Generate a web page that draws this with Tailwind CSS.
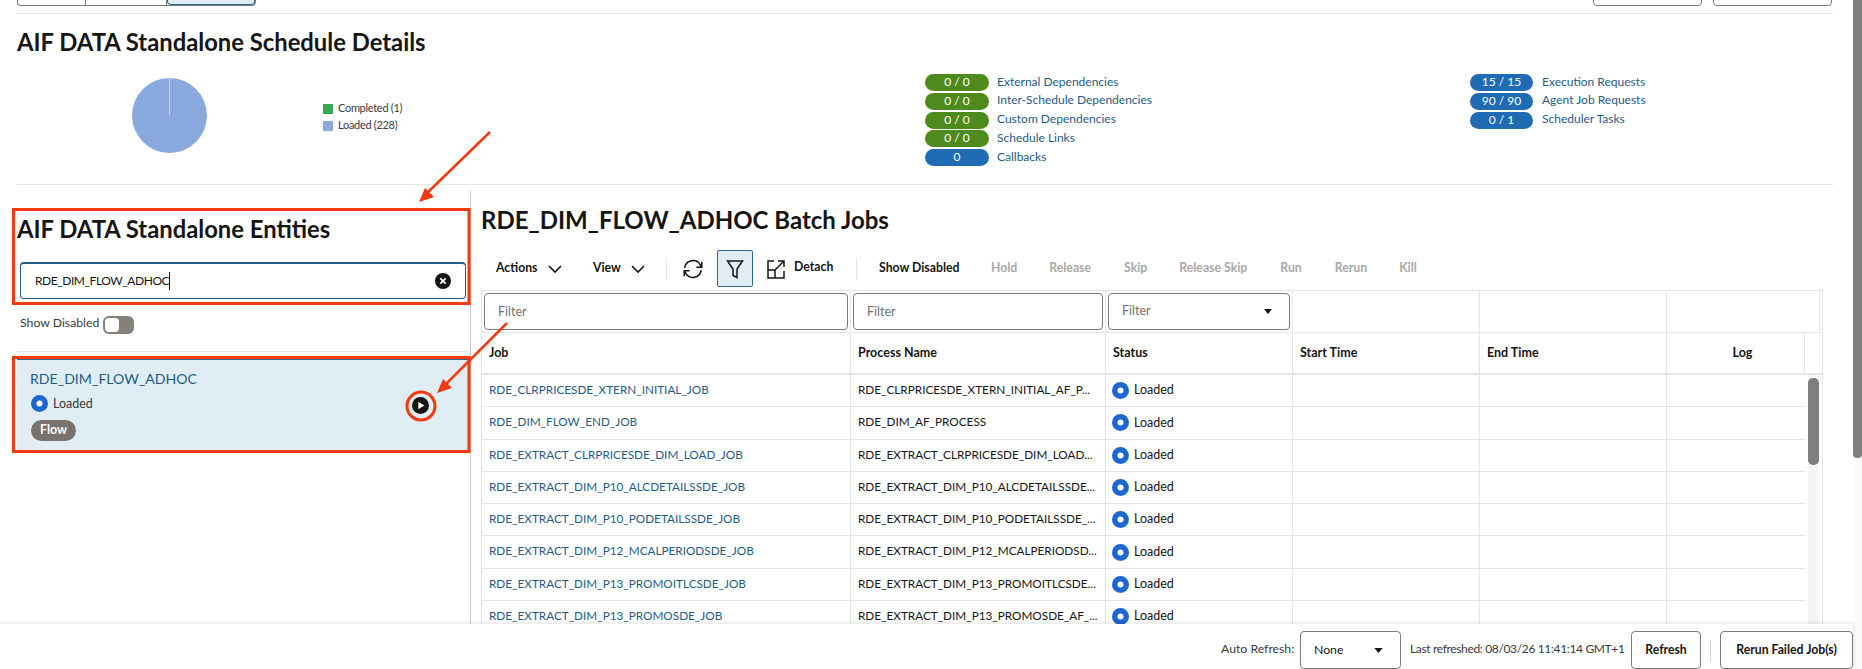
<!DOCTYPE html>
<html><head><meta charset="utf-8"><title>Schedule</title>
<script src="https://cdn.jsdelivr.net/npm/@tailwindcss/browser@4"></script></head>
<body class="bg-white">
<div class="relative flex w-[1862px] h-[669px] overflow-hidden bg-white text-[#161513] font-['Lato','Noto_Sans',sans-serif]">
  <div class="w-[1853px] flex flex-col">
    <div class="h-[624px] overflow-hidden px-[17px]">
      <div class="h-[14px] w-[1816px] border-b border-[#e5e5e5] flex justify-between">
        <div class="flex h-[6px] w-[239px] border border-t-0 border-[#7a7a7a] rounded-b-[4px]">
          <div class="w-[68px] border-r border-[#7a7a7a]"></div>
          <div class="w-[81px] border-r border-[#7a7a7a]"></div>
          <div class="flex-1 bg-[#e0edf5] border border-t-0 border-[#2b6a8e] rounded-b-[4px]"></div>
        </div>
        <div class="flex gap-[11px] mr-[1px]">
          <div class="w-[109px] h-[10px] -mt-[4px] border border-[#7a7a7a] rounded-b-[4px]"></div>
          <div class="w-[119px] h-[10px] -mt-[4px] border border-[#7a7a7a] rounded-b-[4px]"></div>
        </div>
      </div>
      <div class="h-[171px] w-[1816px] border-b border-[#e5e5e5]">
        <h1 class="pt-[12px] text-[23.8px] leading-[32px] font-bold">AIF DATA Standalone Schedule Details</h1>
        <div class="grid grid-cols-[306px_602px_545px_1fr]">
          <div class="pl-[115px] pt-[20px]">
            <svg width="75" height="75" viewBox="0 0 75 75"><circle cx="37.5" cy="37.5" r="37.5" fill="#8aa9dc"/><line x1="37.5" y1="0" x2="37.5" y2="37" stroke="#c5d4ec" stroke-width="1"/></svg>
          </div>
          <div class="pt-[42px] text-[11px] tracking-[-0.3px] text-[#3a3a3a]">
            <div class="flex items-center h-[17px]"><span class="w-[10px] h-[10px] bg-[#34a853] mr-[5px]"></span>Completed (1)</div>
            <div class="flex items-center h-[17px]"><span class="w-[10px] h-[10px] bg-[#8aa9dc] mr-[5px]"></span>Loaded (228)</div>
          </div>
          <div class="pt-[16px] text-[12px] flex flex-col gap-[1.75px]">
            <div class="flex items-center h-[17px]"><span class="w-[64px] h-full rounded-full bg-[#4f8a1c] text-white text-center leading-[15px]">0 / 0</span><span class="ml-[8px] -mt-[2px] text-[#1f5c85]">External Dependencies</span></div>
            <div class="flex items-center h-[17px]"><span class="w-[64px] h-full rounded-full bg-[#4f8a1c] text-white text-center leading-[15px]">0 / 0</span><span class="ml-[8px] -mt-[2px] text-[#1f5c85]">Inter-Schedule Dependencies</span></div>
            <div class="flex items-center h-[17px]"><span class="w-[64px] h-full rounded-full bg-[#4f8a1c] text-white text-center leading-[15px]">0 / 0</span><span class="ml-[8px] -mt-[2px] text-[#1f5c85]">Custom Dependencies</span></div>
            <div class="flex items-center h-[17px]"><span class="w-[64px] h-full rounded-full bg-[#4f8a1c] text-white text-center leading-[15px]">0 / 0</span><span class="ml-[8px] -mt-[2px] text-[#1f5c85]">Schedule Links</span></div>
            <div class="flex items-center h-[17px]"><span class="w-[64px] h-full rounded-full bg-[#1f6bb4] text-white text-center leading-[15px]">0</span><span class="ml-[8px] -mt-[2px] text-[#1f5c85]">Callbacks</span></div>
          </div>
          <div class="pt-[16px] text-[12px] flex flex-col gap-[1.75px]">
            <div class="flex items-center h-[17px]"><span class="w-[63px] h-full rounded-full bg-[#1f6bb4] text-white text-center leading-[15px]">15 / 15</span><span class="ml-[9px] -mt-[2px] text-[#1f5c85]">Execution Requests</span></div>
            <div class="flex items-center h-[17px]"><span class="w-[63px] h-full rounded-full bg-[#1f6bb4] text-white text-center leading-[15px]">90 / 90</span><span class="ml-[9px] -mt-[2px] text-[#1f5c85]">Agent Job Requests</span></div>
            <div class="flex items-center h-[17px]"><span class="w-[63px] h-full rounded-full bg-[#1f6bb4] text-white text-center leading-[15px]">0 / 1</span><span class="ml-[9px] -mt-[2px] text-[#1f5c85]">Scheduler Tasks</span></div>
          </div>
        </div>
      </div>
      <div class="flex mt-[6px] h-[433px]">
        <div class="w-[454px] border-r border-[#c8c8c8] pr-[2px]">
          <h2 class="pt-[22px] text-[23.8px] leading-[32px] font-bold">AIF DATA Standalone Entities</h2>
          <div class="ml-[3px] mt-[17px] w-[446px] h-[37px] border border-t-2 border-[#1f6088] rounded-[4px] flex items-center justify-between pl-[14px] pr-[14px] text-[12px] tracking-[-0.45px]">
            <span class="border-r border-[#161513] leading-[18px]">RDE_DIM_FLOW_ADHOC</span>
            <svg width="16" height="16" viewBox="0 0 16 16"><circle cx="8" cy="8" r="8" fill="#161513"/><path d="M5.3 5.3l5.4 5.4M10.7 5.3l-5.4 5.4" stroke="#fff" stroke-width="1.8"/></svg>
          </div>
          <div class="ml-[3px] mt-[17px] flex items-center h-[18px] text-[12.25px] text-[#3a3a3a]">
            <span class="-mt-[3px]">Show Disabled</span>
            <span class="ml-[4px] w-[31px] h-[18px] rounded-[6px] bg-[#86807a] p-[2px]"><span class="block w-[14px] h-[14px] bg-white rounded-[4px]"></span></span>
          </div>
          <div class="mt-[17px] border-t border-[#e5e5e5]"></div>
          <div class="mt-[7px] w-[451px] h-[91px] bg-[#e0edf5] border-t border-[#2b6a8e] pl-[13px] pr-[39px] pt-[9px] flex justify-between items-start">
            <div>
              <div class="text-[#1f5c85] text-[14.1px] leading-[20px]">RDE_DIM_FLOW_ADHOC</div>
              <div class="flex items-center gap-[5px] mt-[6px] ml-[1px] text-[12.5px] leading-[17px] text-[#3a3a3a]">
                <svg width="17" height="17" viewBox="0 0 17 17"><circle cx="8.5" cy="8.5" r="8.5" fill="#1f67d0"/><circle cx="8.5" cy="8.5" r="3" fill="#fff"/></svg>Loaded
              </div>
              <div class="mt-[8px] ml-[1px] w-[45px] h-[21px] rounded-full bg-[#79716b] text-white text-center text-[12.5px] font-bold leading-[20px]">Flow</div>
            </div>
            <svg width="17" height="17" viewBox="0 0 17 17" class="mt-[28px]"><circle cx="8.5" cy="8.5" r="8.5" fill="#161513"/><path d="M6.3 4.8v7.4l6-3.7z" fill="#fff"/></svg>
          </div>
        </div>
        <div class="flex-1 pl-[10px]">
          <h2 class="pt-[13px] text-[24px] leading-[32px] font-bold">RDE_DIM_FLOW_ADHOC Batch Jobs</h2>
          <div class="mt-[14px] h-[37px] flex items-center text-[12.25px] font-bold">
            <span class="ml-[15px] w-[41px]">Actions</span>
            <svg class="ml-[10px]" width="16" height="16" viewBox="0 0 16 16" fill="none" stroke="#161513" stroke-width="1.6"><path d="M2 5l6 6 6-6"/></svg>
            <span class="ml-[30px] w-[28px]">View</span>
            <svg class="ml-[9px]" width="16" height="16" viewBox="0 0 16 16" fill="none" stroke="#161513" stroke-width="1.6"><path d="M2 5l6 6 6-6"/></svg>
            <span class="ml-[20px] w-px h-[22px] bg-[#e5e5e5]"></span>
            <svg class="ml-[15px]" width="22" height="22" viewBox="0 0 20 20" fill="none" stroke="#161513" stroke-width="1.4"><path d="M2.5 9a7.6 7.6 0 0 1 14-3l1 2M17.5 11a7.6 7.6 0 0 1-14 3l-1-2"/><path d="M18 3.5v5h-5M2 16.5v-5h5"/></svg>
            <span class="ml-[13px] w-[36px] h-[37px] bg-[#e0edf5] border border-[#2b6a8e] rounded-[2px] flex items-center justify-center">
              <svg width="20" height="22" viewBox="0 0 20 22" fill="none" stroke="#161513" stroke-width="1.5"><path d="M2.5 3h15L12 11v8.5l-4-2V11z"/></svg>
            </span>
            <svg class="ml-[13px]" width="20" height="22" viewBox="0 0 20 22" fill="none" stroke="#161513" stroke-width="1.5"><path d="M8 3H2v17h16v-7"/><path d="M12 3h6v6M18 3L8 13M2 12h7v8"/></svg>
            <span class="ml-[8px] -mt-[2px] w-[38px]">Detach</span>
            <span class="ml-[24px] w-px h-[22px] bg-[#e5e5e5]"></span>
            <span class="ml-[22px] w-[79px] whitespace-nowrap">Show Disabled</span>
            <span class="ml-[33px] text-[#a9a9a9]">Hold</span>
            <span class="ml-[32px] text-[#a9a9a9]">Release</span>
            <span class="ml-[33px] text-[#a9a9a9]">Skip</span>
            <span class="ml-[32px] text-[#a9a9a9]">Release Skip</span>
            <span class="ml-[33px] text-[#a9a9a9]">Run</span>
            <span class="ml-[33px] text-[#a9a9a9]">Rerun</span>
            <span class="ml-[32px] text-[#a9a9a9]">Kill</span>
          </div>
          <div class="mt-[3px] w-[1342px] border border-[#e5e5e5] text-[12.5px]">
            <div class="grid grid-cols-[369px_255px_187px_187px_187px_153px_1fr] h-[42px] border-b border-[#e5e5e5] items-center">
              <div class="h-full border-r border-[#e5e5e5] p-[2px] pr-[2px]"><div class="h-[37px] border border-[#7a7a7a] rounded-[4px] pl-[13px] leading-[35px] text-[#6f6f6f]">Filter</div></div>
              <div class="h-full border-r border-[#e5e5e5] p-[2px]"><div class="h-[37px] border border-[#7a7a7a] rounded-[4px] pl-[13px] leading-[35px] text-[#6f6f6f]">Filter</div></div>
              <div class="h-full border-r border-[#e5e5e5] p-[2px]"><div class="h-[37px] border border-[#7a7a7a] rounded-[4px] pl-[13px] pr-[17px] flex items-center justify-between text-[#6f6f6f]">Filter<svg width="8" height="5" viewBox="0 0 10 6"><path d="M0 0h10L5 6z" fill="#161513"/></svg></div></div>
              <div class="h-full border-r border-[#e5e5e5]"></div>
              <div class="h-full border-r border-[#e5e5e5]"></div>
              <div class="h-full border-r border-[#e5e5e5]"></div>
              <div></div>
            </div>
            <div class="grid grid-cols-[369px_255px_187px_187px_187px_138px_1fr] h-[42px] border-b-2 border-[#e5e5e5] items-center font-bold">
              <div class="h-full border-r border-[#e5e5e5] pl-[7px] leading-[40px]">Job</div>
              <div class="h-full border-r border-[#e5e5e5] pl-[7px] leading-[40px]">Process Name</div>
              <div class="h-full border-r border-[#e5e5e5] pl-[7px] leading-[40px]">Status</div>
              <div class="h-full border-r border-[#e5e5e5] pl-[7px] leading-[40px]">Start Time</div>
              <div class="h-full border-r border-[#e5e5e5] pl-[7px] leading-[40px]">End Time</div>
              <div class="h-full border-r border-[#e5e5e5] pl-[14px] text-center leading-[40px]">Log</div>
              <div></div>
            </div>
            <div class="flex">
              <div class="w-[1323px] text-[11.75px]">
                <div class="grid grid-cols-[369px_255px_187px_187px_187px_1fr] h-[32.3px] border-b border-[#e5e5e5] items-center">
                  <div class="h-full border-r border-[#e5e5e5] pl-[7px] leading-[30px] text-[#1f5c85]">RDE_CLRPRICESDE_XTERN_INITIAL_JOB</div>
                  <div class="h-full border-r border-[#e5e5e5] pl-[7px] leading-[30px]">RDE_CLRPRICESDE_XTERN_INITIAL_AF_P...</div>
                  <div class="h-full border-r border-[#e5e5e5] pl-[6px] text-[12.5px] flex items-center gap-[5px]"><svg width="17" height="17" viewBox="0 0 17 17"><circle cx="8.5" cy="8.5" r="8.5" fill="#1f67d0"/><circle cx="8.5" cy="8.5" r="3" fill="#fff"/></svg>Loaded</div>
                  <div class="h-full border-r border-[#e5e5e5]"></div><div class="h-full border-r border-[#e5e5e5]"></div><div></div>
                </div>
                <div class="grid grid-cols-[369px_255px_187px_187px_187px_1fr] h-[32.3px] border-b border-[#e5e5e5] items-center">
                  <div class="h-full border-r border-[#e5e5e5] pl-[7px] leading-[30px] text-[#1f5c85]">RDE_DIM_FLOW_END_JOB</div>
                  <div class="h-full border-r border-[#e5e5e5] pl-[7px] leading-[30px]">RDE_DIM_AF_PROCESS</div>
                  <div class="h-full border-r border-[#e5e5e5] pl-[6px] text-[12.5px] flex items-center gap-[5px]"><svg width="17" height="17" viewBox="0 0 17 17"><circle cx="8.5" cy="8.5" r="8.5" fill="#1f67d0"/><circle cx="8.5" cy="8.5" r="3" fill="#fff"/></svg>Loaded</div>
                  <div class="h-full border-r border-[#e5e5e5]"></div><div class="h-full border-r border-[#e5e5e5]"></div><div></div>
                </div>
                <div class="grid grid-cols-[369px_255px_187px_187px_187px_1fr] h-[32.3px] border-b border-[#e5e5e5] items-center">
                  <div class="h-full border-r border-[#e5e5e5] pl-[7px] leading-[30px] text-[#1f5c85]">RDE_EXTRACT_CLRPRICESDE_DIM_LOAD_JOB</div>
                  <div class="h-full border-r border-[#e5e5e5] pl-[7px] leading-[30px]">RDE_EXTRACT_CLRPRICESDE_DIM_LOAD...</div>
                  <div class="h-full border-r border-[#e5e5e5] pl-[6px] text-[12.5px] flex items-center gap-[5px]"><svg width="17" height="17" viewBox="0 0 17 17"><circle cx="8.5" cy="8.5" r="8.5" fill="#1f67d0"/><circle cx="8.5" cy="8.5" r="3" fill="#fff"/></svg>Loaded</div>
                  <div class="h-full border-r border-[#e5e5e5]"></div><div class="h-full border-r border-[#e5e5e5]"></div><div></div>
                </div>
                <div class="grid grid-cols-[369px_255px_187px_187px_187px_1fr] h-[32.3px] border-b border-[#e5e5e5] items-center">
                  <div class="h-full border-r border-[#e5e5e5] pl-[7px] leading-[30px] text-[#1f5c85]">RDE_EXTRACT_DIM_P10_ALCDETAILSSDE_JOB</div>
                  <div class="h-full border-r border-[#e5e5e5] pl-[7px] leading-[30px]">RDE_EXTRACT_DIM_P10_ALCDETAILSSDE...</div>
                  <div class="h-full border-r border-[#e5e5e5] pl-[6px] text-[12.5px] flex items-center gap-[5px]"><svg width="17" height="17" viewBox="0 0 17 17"><circle cx="8.5" cy="8.5" r="8.5" fill="#1f67d0"/><circle cx="8.5" cy="8.5" r="3" fill="#fff"/></svg>Loaded</div>
                  <div class="h-full border-r border-[#e5e5e5]"></div><div class="h-full border-r border-[#e5e5e5]"></div><div></div>
                </div>
                <div class="grid grid-cols-[369px_255px_187px_187px_187px_1fr] h-[32.3px] border-b border-[#e5e5e5] items-center">
                  <div class="h-full border-r border-[#e5e5e5] pl-[7px] leading-[30px] text-[#1f5c85]">RDE_EXTRACT_DIM_P10_PODETAILSSDE_JOB</div>
                  <div class="h-full border-r border-[#e5e5e5] pl-[7px] leading-[30px]">RDE_EXTRACT_DIM_P10_PODETAILSSDE_...</div>
                  <div class="h-full border-r border-[#e5e5e5] pl-[6px] text-[12.5px] flex items-center gap-[5px]"><svg width="17" height="17" viewBox="0 0 17 17"><circle cx="8.5" cy="8.5" r="8.5" fill="#1f67d0"/><circle cx="8.5" cy="8.5" r="3" fill="#fff"/></svg>Loaded</div>
                  <div class="h-full border-r border-[#e5e5e5]"></div><div class="h-full border-r border-[#e5e5e5]"></div><div></div>
                </div>
                <div class="grid grid-cols-[369px_255px_187px_187px_187px_1fr] h-[32.3px] border-b border-[#e5e5e5] items-center">
                  <div class="h-full border-r border-[#e5e5e5] pl-[7px] leading-[30px] text-[#1f5c85]">RDE_EXTRACT_DIM_P12_MCALPERIODSDE_JOB</div>
                  <div class="h-full border-r border-[#e5e5e5] pl-[7px] leading-[30px]">RDE_EXTRACT_DIM_P12_MCALPERIODSD...</div>
                  <div class="h-full border-r border-[#e5e5e5] pl-[6px] text-[12.5px] flex items-center gap-[5px]"><svg width="17" height="17" viewBox="0 0 17 17"><circle cx="8.5" cy="8.5" r="8.5" fill="#1f67d0"/><circle cx="8.5" cy="8.5" r="3" fill="#fff"/></svg>Loaded</div>
                  <div class="h-full border-r border-[#e5e5e5]"></div><div class="h-full border-r border-[#e5e5e5]"></div><div></div>
                </div>
                <div class="grid grid-cols-[369px_255px_187px_187px_187px_1fr] h-[32.3px] border-b border-[#e5e5e5] items-center">
                  <div class="h-full border-r border-[#e5e5e5] pl-[7px] leading-[30px] text-[#1f5c85]">RDE_EXTRACT_DIM_P13_PROMOITLCSDE_JOB</div>
                  <div class="h-full border-r border-[#e5e5e5] pl-[7px] leading-[30px]">RDE_EXTRACT_DIM_P13_PROMOITLCSDE...</div>
                  <div class="h-full border-r border-[#e5e5e5] pl-[6px] text-[12.5px] flex items-center gap-[5px]"><svg width="17" height="17" viewBox="0 0 17 17"><circle cx="8.5" cy="8.5" r="8.5" fill="#1f67d0"/><circle cx="8.5" cy="8.5" r="3" fill="#fff"/></svg>Loaded</div>
                  <div class="h-full border-r border-[#e5e5e5]"></div><div class="h-full border-r border-[#e5e5e5]"></div><div></div>
                </div>
                <div class="grid grid-cols-[369px_255px_187px_187px_187px_1fr] h-[32.3px] border-b border-[#e5e5e5] items-center">
                  <div class="h-full border-r border-[#e5e5e5] pl-[7px] leading-[30px] text-[#1f5c85]">RDE_EXTRACT_DIM_P13_PROMOSDE_JOB</div>
                  <div class="h-full border-r border-[#e5e5e5] pl-[7px] leading-[30px]">RDE_EXTRACT_DIM_P13_PROMOSDE_AF_...</div>
                  <div class="h-full border-r border-[#e5e5e5] pl-[6px] text-[12.5px] flex items-center gap-[5px]"><svg width="17" height="17" viewBox="0 0 17 17"><circle cx="8.5" cy="8.5" r="8.5" fill="#1f67d0"/><circle cx="8.5" cy="8.5" r="3" fill="#fff"/></svg>Loaded</div>
                  <div class="h-full border-r border-[#e5e5e5]"></div><div class="h-full border-r border-[#e5e5e5]"></div><div></div>
                </div>
              </div>
              <div class="w-[11px] ml-[3px] bg-[#f5f5f5] pt-[3px]"><div class="h-[87px] rounded-[5px] bg-[#7f7f7f]"></div></div>
            </div>
          </div>
        </div>
      </div>
    </div>
    <div class="h-[45px] bg-white shadow-[0_-1px_4px_rgba(0,0,0,0.12)] z-10 flex items-end justify-end text-[12.25px] text-[#3a3a3a]">
      <span class="mb-[11px] mr-[9px] w-[70px] whitespace-nowrap">Auto Refresh:</span>
      <div class="w-[101px] h-[38px] border border-[#7a7a7a] rounded-[4px] flex items-center justify-between pl-[13px] pr-[17px] text-[#161513]">None<svg width="9" height="5" viewBox="0 0 10 6"><path d="M0 0h10L5 6z" fill="#161513"/></svg></div>
      <span class="mb-[11px] ml-[9px] mr-[9px] w-[212px] text-[12px] tracking-[-0.35px] whitespace-nowrap">Last refreshed: 08/03/26 11:41:14 GMT+1</span>
      <div class="w-[70px] h-[38px] border border-[#7a7a7a] rounded-[4px] flex items-center justify-center font-bold text-[#161513]">Refresh</div>
      <span class="w-px h-[22px] bg-[#d5d5d5] mx-[9px] mb-[7px]"></span>
      <div class="w-[133px] h-[38px] border border-[#7a7a7a] rounded-[4px] flex items-center justify-center font-bold text-[#161513]">Rerun Failed Job(s)</div>
    </div>
  </div>
  <div class="w-[9px] h-full bg-[#fafafa]"><div class="h-[458px] bg-[#7f7f7f] rounded-b-[4px]"></div></div>

  <svg class="absolute left-0 top-0 pointer-events-none z-20" width="1862" height="669" viewBox="0 0 1862 669" fill="none">
    <rect x="13.5" y="209.5" width="455.5" height="94" stroke="#f2390f" stroke-width="3"/>
    <rect x="13.5" y="357.5" width="455.5" height="94" stroke="#f2390f" stroke-width="3"/>
    <circle cx="421" cy="406" r="14" stroke="#f2390f" stroke-width="3"/>
    <path d="M490 132L425 195" stroke="#f2390f" stroke-width="2.5"/>
    <path d="M419 202L425 188L434 197Z" fill="#f2390f"/>
    <path d="M507 323L444 386" stroke="#f2390f" stroke-width="2.5"/>
    <path d="M437 393L443 379L452 388Z" fill="#f2390f"/>
  </svg>
</div>
</body></html>
